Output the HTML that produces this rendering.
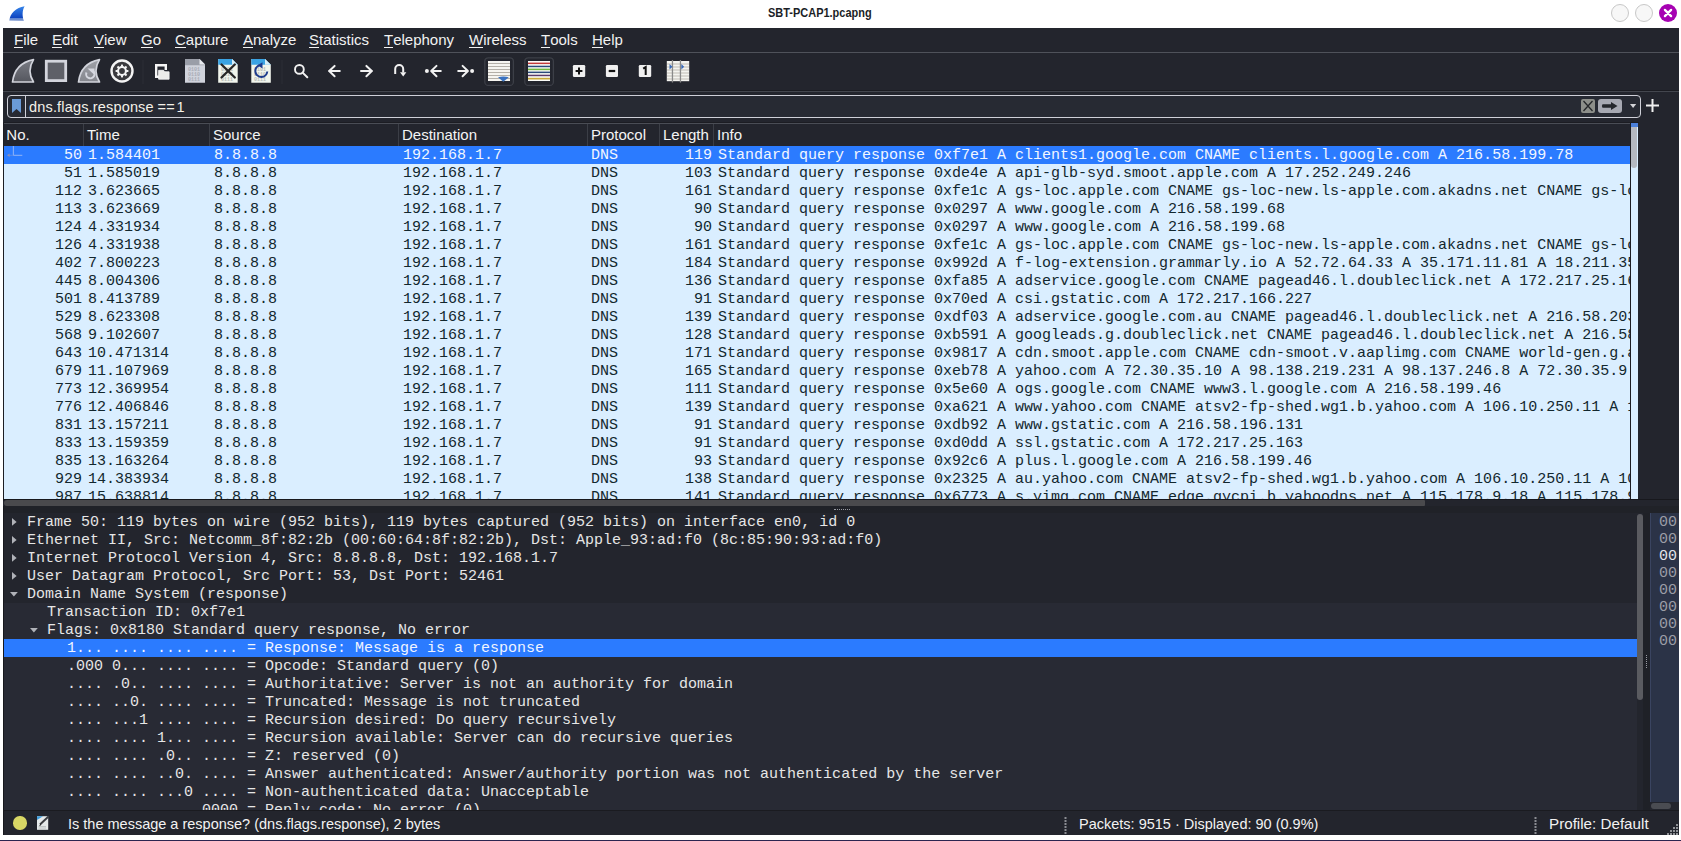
<!DOCTYPE html>
<html><head><meta charset="utf-8"><title>SBT-PCAP1.pcapng</title>
<style>
*{box-sizing:border-box}
html,body{margin:0;padding:0}
body{width:1681px;height:841px;overflow:hidden;position:relative;background:#fff;font-family:"Liberation Sans",sans-serif}
.a{position:absolute}
.mono{font-family:"Liberation Mono",monospace;font-size:15px;line-height:18px;white-space:pre}
.menu span{position:absolute;top:0;color:#f2f2f2;font-size:15px;line-height:24px}
.menu u{text-decoration:none;position:relative}.menu u::after{content:'';position:absolute;left:0;right:0;top:15.6px;height:1.4px;background:#f2f2f2}
.hdr span{position:absolute;top:0;color:#f4f4f4;font-size:15px;line-height:22px}
.hsep{position:absolute;top:0;width:1px;height:22px;background:#3b3e46}
.row{position:absolute;left:0;width:1626px;height:18px;background:#daeeff;color:#12272e;overflow:hidden}
.row.sel{background:#2b7bff;color:#f2f6ff}
.row span{position:absolute;top:1px}
.c0{right:1544px;text-align:right}
.drow{position:absolute;left:0;width:1633px;height:18px;color:#e6e6e6}
.drow.sel{background:#2b7bff;color:#f0f4ff}
.tri{position:absolute;width:0;height:0}
</style></head><body>

<svg class="a" style="left:8px;top:5px" width="18" height="17" viewBox="0 0 18 17"><defs><linearGradient id="fg" x1="0" y1="0" x2="0" y2="1"><stop offset="0" stop-color="#3585ea"/><stop offset="0.78" stop-color="#0f46c2"/><stop offset="0.86" stop-color="#7a9ad6"/><stop offset="1" stop-color="#5f7fc4"/></linearGradient></defs><path d="M1.3 15.6 C2 8.5 8 2.5 16.6 1.2 C14.3 5 14 11 15.9 15.8 Z" fill="url(#fg)"/></svg>
<div class="a" style="left:768px;top:5px;font-size:12.4px;font-weight:bold;color:#1b1e26;line-height:16px;transform:scaleX(0.885);transform-origin:0 0;white-space:pre">SBT-PCAP1.pcapng</div>
<div class="a" style="left:1611px;top:4px;width:18px;height:18px;border-radius:50%;background:#f7f7f7;border:1px solid #c8c8c8"></div>
<div class="a" style="left:1635px;top:4px;width:18px;height:18px;border-radius:50%;background:#f7f7f7;border:1px solid #c8c8c8"></div>
<svg class="a" style="left:1659px;top:4px" width="18" height="18" viewBox="0 0 18 18"><circle cx="9" cy="9" r="9" fill="#a602b2"/><path d="M5.9 5.9 L12.1 12.1 M12.1 5.9 L5.9 12.1" stroke="#fff" stroke-width="2.3" stroke-linecap="round"/></svg>
<div class="a" style="left:3px;top:28px;width:1676px;height:807px;background:#23252d"></div>
<div class="a" style="left:0;top:840px;width:1681px;height:1px;background:#2b2450"></div>
<div class="a menu" style="left:0;top:28px;width:1679px;height:24px">
<span style="left:14px"><u>F</u>ile</span>
<span style="left:52px"><u>E</u>dit</span>
<span style="left:94px"><u>V</u>iew</span>
<span style="left:141px"><u>G</u>o</span>
<span style="left:175px"><u>C</u>apture</span>
<span style="left:243px"><u>A</u>nalyze</span>
<span style="left:309px"><u>S</u>tatistics</span>
<span style="left:384px"><u>T</u>elephony</span>
<span style="left:469px"><u>W</u>ireless</span>
<span style="left:541px"><u>T</u>ools</span>
<span style="left:592px"><u>H</u>elp</span>
</div>
<div class="a" style="left:3px;top:52px;width:1676px;height:1px;background:#4f525a"></div>
<div class="a" style="left:3px;top:90px;width:1676px;height:1px;background:#1b1c22"></div>
<div class="a" style="left:3px;top:91px;width:1676px;height:1px;background:#43464e"></div>
<svg class="a" style="left:0;top:53px" width="700" height="38" viewBox="0 53 700 38">
<defs>
<linearGradient id="fin1" x1="0" y1="0" x2="0" y2="1"><stop offset="0" stop-color="#7a7c84"/><stop offset="1" stop-color="#55575f"/></linearGradient>
<linearGradient id="fin2" x1="0" y1="0" x2="0" y2="1"><stop offset="0" stop-color="#9fa1a8"/><stop offset="1" stop-color="#85878e"/></linearGradient>
</defs>
<!-- start capture fin -->
<path d="M12.5 82 C14 70 21 62 33.5 59.6 C29.5 66 28.5 74 33.5 82 Z" fill="url(#fin1)" stroke="#d2d4dc" stroke-width="1.7" stroke-linejoin="round"/>
<!-- stop square -->
<rect x="46.3" y="61.2" width="19.4" height="19.4" fill="#5e6068" stroke="#d3d5dd" stroke-width="2.8"/>
<!-- restart fin -->
<path d="M78.5 82 C80 70 87 62 99.5 59.6 C95.5 66 94.5 74 99.5 82 Z" fill="url(#fin2)" stroke="#d2d4dc" stroke-width="1.7" stroke-linejoin="round"/>
<path d="M86.5 72.5 A4.2 4.2 0 1 0 92.5 70.5" fill="none" stroke="#d6d8e0" stroke-width="2"/>
<path d="M87.5 68.5 H94.5 V75 Z" fill="#d6d8e0"/>
<!-- options gear -->
<circle cx="122" cy="71" r="10.5" fill="#3a3a3e" stroke="#f4f4f4" stroke-width="2.4"/>
<g fill="#f4f4f4">
<circle cx="122" cy="71" r="4.9"/>
<rect x="121" y="64.6" width="2" height="12.8"/>
<rect x="115.6" y="70" width="12.8" height="2"/>
<rect x="121" y="64.6" width="2" height="12.8" transform="rotate(45 122 71)"/>
<rect x="121" y="64.6" width="2" height="12.8" transform="rotate(-45 122 71)"/>
</g>
<circle cx="122" cy="71" r="2.9" fill="#3a3a3e"/>
<!-- separator -->
<rect x="142.5" y="60" width="1" height="24" fill="#2c2e36"/>
<!-- open -->
<path d="M165.8 70 V65.2 H156.2 V76.8 H159" fill="none" stroke="#f6f6f6" stroke-width="2.4"/>
<path d="M158.6 70.3 H163.5 L165 71.8 H169.1 V79.2 H158.6 Z" fill="#ececea" stroke="#f6f6f6" stroke-width="0.8"/>
<!-- file (grey) -->
<path d="M185 59 H199.5 L205 64.5 V82.8 H185 Z" fill="#d0d3dc"/>
<path d="M185 59 H199.5 L205 64.5 V65.2 H185 Z" fill="#9a9ea8"/>
<path d="M199.5 59 V64.5 H205" fill="#e8eaee"/>
<g fill="#a8acb6" font-family="Liberation Mono" font-size="5" font-weight="bold"><text x="188" y="70.5">0101</text><text x="188" y="75.5">0110</text><text x="188" y="80.5">0111</text></g>
<!-- close file -->
<path d="M218.2 59 H232 L237.7 64.7 V82.8 H218.2 Z" fill="#f1f5ec"/>
<path d="M218.2 59 H232 L237.7 64.7 V64.8 H218.2 Z" fill="#3aa3e3"/>
<path d="M232 59 V64.7 H237.7" fill="#d8eef8"/>
<g fill="#b8bcb8" font-family="Liberation Mono" font-size="5" font-weight="bold"><text x="221" y="70.5">0101</text><text x="221" y="75.5">0110</text><text x="221" y="80.5">0111</text></g>
<path d="M221.5 64.5 L234.8 77.5 M234.8 64.5 L221.5 77.5" stroke="#262626" stroke-width="2.3" stroke-linecap="round"/>
<!-- reload file -->
<path d="M251.3 59 H265 L270.8 64.7 V82.8 H251.3 Z" fill="#f1f5ec"/>
<path d="M251.3 59 H265 L270.8 64.7 V64.8 H251.3 Z" fill="#3aa3e3"/>
<path d="M265 59 V64.7 H270.8" fill="#d8eef8"/>
<g fill="#b8bcb8" font-family="Liberation Mono" font-size="5" font-weight="bold"><text x="254" y="70.5">0101</text><text x="254" y="75.5">0110</text><text x="254" y="80.5">0111</text></g>
<path d="M259.5 65.2 A6 6 0 1 0 267.3 71.5" fill="none" stroke="#1d3b8c" stroke-width="2"/>
<path d="M257.5 65.2 L262.5 62.3 V68.5 Z" fill="#1d3b8c"/>
<!-- separator -->
<rect x="281.5" y="60" width="1" height="24" fill="#2c2e36"/>
<!-- search -->
<circle cx="299.4" cy="69.4" r="4.4" fill="none" stroke="#f2f2f2" stroke-width="1.9"/>
<path d="M302.6 72.6 L307.3 77.3" stroke="#f2f2f2" stroke-width="2" stroke-linecap="round"/>
<!-- back -->
<path d="M339.8 71 H329 M334.6 65.9 L329.2 71 L334.6 76.2" fill="none" stroke="#f2f2f2" stroke-width="2" stroke-linecap="round" stroke-linejoin="round"/>
<!-- forward -->
<path d="M361 71 H372 M366.4 65.9 L371.8 71 L366.4 76.2" fill="none" stroke="#f2f2f2" stroke-width="2" stroke-linecap="round" stroke-linejoin="round"/>
<!-- go to packet (u-turn) -->
<path d="M395.2 74 V69 A4 4 0 0 1 403.2 69 V72.5" fill="none" stroke="#f2f2f2" stroke-width="2"/>
<path d="M400 72.2 H406.4 L403.2 76.6 Z" fill="#f2f2f2"/>
<!-- first packet -->
<circle cx="426.9" cy="71" r="2" fill="#f2f2f2"/>
<path d="M440.8 71 H431.5 M436.5 65.9 L431.2 71 L436.5 76.2" fill="none" stroke="#f2f2f2" stroke-width="2" stroke-linecap="round" stroke-linejoin="round"/>
<!-- last packet -->
<circle cx="472.1" cy="71" r="2" fill="#f2f2f2"/>
<path d="M458.2 71 H467.5 M462.6 65.9 L467.9 71 L462.6 76.2" fill="none" stroke="#f2f2f2" stroke-width="2" stroke-linecap="round" stroke-linejoin="round"/>
<!-- auto scroll button frame -->
<rect x="484.8" y="57.8" width="28.6" height="27.6" rx="3.5" fill="#23252d" stroke="#3c3f47" stroke-width="1.3"/>
<rect x="488" y="61" width="22" height="20" fill="#f6f5f0"/>
<g stroke="#b4b0a8" stroke-width="1"><path d="M488 63.5 H510 M488 66.5 H510 M488 69.5 H510 M488 72.5 H510 M488 75.5 H510 M488 78.5 H510"/></g>
<path d="M498 77.3 Q503.3 75.5 508.8 77.3 L503.3 81.8 Z" fill="#3a72c0"/>
<!-- colorize frame -->
<rect x="524.8" y="57.8" width="28.6" height="27.6" rx="3.5" fill="#23252d" stroke="#3c3f47" stroke-width="1.3"/>
<rect x="528" y="61" width="22" height="20" fill="#fbfbf8"/>
<rect x="528" y="62.6" width="22" height="1.5" fill="#c23a3a"/>
<rect x="528" y="65.7" width="22" height="1.5" fill="#2a4a7a"/>
<rect x="528" y="68.6" width="22" height="1.6" fill="#72b840"/>
<rect x="528" y="71.6" width="22" height="1.5" fill="#2a4a7a"/>
<rect x="528" y="74.7" width="22" height="1.5" fill="#5a3a6a"/>
<rect x="528" y="77.8" width="22" height="1.7" fill="#c8a838"/>
<!-- zoom in -->
<rect x="572.9" y="64.9" width="12.3" height="12.2" rx="1.3" fill="#f0f0f0"/>
<path d="M579 67.6 V74.4 M575.6 71 H582.4" stroke="#111" stroke-width="2"/>
<!-- zoom out -->
<rect x="605.9" y="64.9" width="12.1" height="12.2" rx="1.3" fill="#f0f0f0"/>
<path d="M608.7 71 H615.2" stroke="#111" stroke-width="2.2"/>
<!-- normal size -->
<rect x="638.8" y="64.9" width="12.4" height="12.2" rx="1.3" fill="#f0f0f0"/>
<path d="M643.2 68.6 L645.7 67 V75" fill="none" stroke="#111" stroke-width="2"/>
<!-- resize columns -->
<rect x="666.8" y="61" width="22.4" height="20.2" fill="#f4f4f0"/>
<g stroke="#c0bcb4" stroke-width="1"><path d="M667 64 H689 M667 67 H689 M667 70 H689 M667 73 H689 M667 76 H689 M667 79 H689"/></g>
<rect x="671.8" y="60" width="1.3" height="22.5" fill="#8a8a8a"/>
<rect x="679.8" y="60" width="1.3" height="22.5" fill="#8a8a8a"/>
<path d="M669.5 64 L672.5 66.8 L669.5 69.6 Z" fill="#3a6ab8"/>
<path d="M681.3 64 L684.2 66.8 L681.3 69.6 Z" fill="#3a6ab8"/>
</svg>

<div class="a" style="left:7px;top:95px;width:1634px;height:23px;border:1.5px solid #cfd0d8;border-radius:4px;background:#272a33"></div>
<div class="a" style="left:25px;top:96px;width:1px;height:21px;background:#cfd0d8"></div>
<svg class="a" style="left:12px;top:99px" width="9" height="14" viewBox="0 0 9 14"><path d="M0 0 H9 V14 L4.5 10 L0 14 Z" fill="#6a9bd8"/></svg>
<div class="a" style="left:29px;top:98px;font-size:14.5px;line-height:19px;color:#f4f1e8;letter-spacing:0.17px;white-space:pre">dns.flags.response</div>
<div class="a" style="left:157.5px;top:98px;font-size:14.5px;line-height:19px;color:#f4f1e8;letter-spacing:0.4px">==</div>
<div class="a" style="left:176.5px;top:98px;font-size:14.5px;line-height:19px;color:#f4f1e8">1</div>
<div class="a" style="left:1581px;top:99px;width:14px;height:14px;background:#8d8f8a;border-radius:2px"></div>
<svg class="a" style="left:1581px;top:99px" width="14" height="14"><path d="M2.5 2 L11.5 12 M11.5 2 L2.5 12" stroke="#25272a" stroke-width="1.3"/></svg>
<div class="a" style="left:1598px;top:99px;width:24px;height:14px;background:#a7a9b2;border-radius:3px"></div>
<svg class="a" style="left:1598px;top:99px" width="24" height="14"><path d="M4.5 5.2 H13 V3 L19.5 7 L13 11 V8.8 H4.5 Q3.2 7 4.5 5.2 Z" fill="#25272c"/></svg>
<svg class="a" style="left:1629.5px;top:104px" width="7" height="5"><path d="M0 0 H6.2 L3.1 4 Z" fill="#d4d4d8"/></svg>
<svg class="a" style="left:1645px;top:98px" width="15" height="15"><path d="M7.5 1 V14 M1 7.5 H14" stroke="#f0f0f0" stroke-width="2"/></svg>
<div class="a" style="left:3px;top:122px;width:1636px;height:379px;background:#1c1d23"></div>
<div class="a" style="left:4px;top:123px;width:1634px;height:1px;background:#4a4d55"></div>
<div class="a hdr" style="left:4px;top:124px;width:1626px;height:22px;background:#23252d">
<span style="left:2.3px">No.</span>
<div class="hsep" style="left:79px"></div>
<span style="left:83px">Time</span>
<div class="hsep" style="left:205px"></div>
<span style="left:209px">Source</span>
<div class="hsep" style="left:394px"></div>
<span style="left:398px">Destination</span>
<div class="hsep" style="left:583px"></div>
<span style="left:587px">Protocol</span>
<div class="hsep" style="left:655px"></div>
<span style="left:659px">Length</span>
<div class="hsep" style="left:709px"></div>
<span style="left:713px">Info</span>
</div>
<div class="a" style="left:4px;top:146px;width:1626px;height:353px;overflow:hidden">
<div class="row sel mono" style="top:0px">
<span style="left:0;width:78px;text-align:right">50</span>
<span style="left:84px">1.584401</span>
<span style="left:210px">8.8.8.8</span>
<span style="left:399px">192.168.1.7</span>
<span style="left:587px">DNS</span>
<span style="left:655px;width:53px;text-align:right">119</span>
<span style="left:714px">Standard query response 0xf7e1 A clients1.google.com CNAME clients.l.google.com A 216.58.199.78</span>
<svg class="a" style="left:0;top:0" width="24" height="14"><path d="M9.35 0 V9.3 H18.3" stroke="#93b4f6" stroke-width="1" fill="none"/><path d="M5 9.3 H9" stroke="#5c8ee8" stroke-width="1"/><path d="M3 9.3 L5.6 7.5 V11.1 Z" fill="#8d8fb4"/></svg>
</div>
<div class="row mono" style="top:18px">
<span style="left:0;width:78px;text-align:right">51</span>
<span style="left:84px">1.585019</span>
<span style="left:210px">8.8.8.8</span>
<span style="left:399px">192.168.1.7</span>
<span style="left:587px">DNS</span>
<span style="left:655px;width:53px;text-align:right">103</span>
<span style="left:714px">Standard query response 0xde4e A api-glb-syd.smoot.apple.com A 17.252.249.246</span>
</div>
<div class="row mono" style="top:36px">
<span style="left:0;width:78px;text-align:right">112</span>
<span style="left:84px">3.623665</span>
<span style="left:210px">8.8.8.8</span>
<span style="left:399px">192.168.1.7</span>
<span style="left:587px">DNS</span>
<span style="left:655px;width:53px;text-align:right">161</span>
<span style="left:714px">Standard query response 0xfe1c A gs-loc.apple.com CNAME gs-loc-new.ls-apple.com.akadns.net CNAME gs-loc.ls-apple.com</span>
</div>
<div class="row mono" style="top:54px">
<span style="left:0;width:78px;text-align:right">113</span>
<span style="left:84px">3.623669</span>
<span style="left:210px">8.8.8.8</span>
<span style="left:399px">192.168.1.7</span>
<span style="left:587px">DNS</span>
<span style="left:655px;width:53px;text-align:right">90</span>
<span style="left:714px">Standard query response 0x0297 A www.google.com A 216.58.199.68</span>
</div>
<div class="row mono" style="top:72px">
<span style="left:0;width:78px;text-align:right">124</span>
<span style="left:84px">4.331934</span>
<span style="left:210px">8.8.8.8</span>
<span style="left:399px">192.168.1.7</span>
<span style="left:587px">DNS</span>
<span style="left:655px;width:53px;text-align:right">90</span>
<span style="left:714px">Standard query response 0x0297 A www.google.com A 216.58.199.68</span>
</div>
<div class="row mono" style="top:90px">
<span style="left:0;width:78px;text-align:right">126</span>
<span style="left:84px">4.331938</span>
<span style="left:210px">8.8.8.8</span>
<span style="left:399px">192.168.1.7</span>
<span style="left:587px">DNS</span>
<span style="left:655px;width:53px;text-align:right">161</span>
<span style="left:714px">Standard query response 0xfe1c A gs-loc.apple.com CNAME gs-loc-new.ls-apple.com.akadns.net CNAME gs-loc.ls-apple.com</span>
</div>
<div class="row mono" style="top:108px">
<span style="left:0;width:78px;text-align:right">402</span>
<span style="left:84px">7.800223</span>
<span style="left:210px">8.8.8.8</span>
<span style="left:399px">192.168.1.7</span>
<span style="left:587px">DNS</span>
<span style="left:655px;width:53px;text-align:right">184</span>
<span style="left:714px">Standard query response 0x992d A f-log-extension.grammarly.io A 52.72.64.33 A 35.171.11.81 A 18.211.35.118</span>
</div>
<div class="row mono" style="top:126px">
<span style="left:0;width:78px;text-align:right">445</span>
<span style="left:84px">8.004306</span>
<span style="left:210px">8.8.8.8</span>
<span style="left:399px">192.168.1.7</span>
<span style="left:587px">DNS</span>
<span style="left:655px;width:53px;text-align:right">136</span>
<span style="left:714px">Standard query response 0xfa85 A adservice.google.com CNAME pagead46.l.doubleclick.net A 172.217.25.162</span>
</div>
<div class="row mono" style="top:144px">
<span style="left:0;width:78px;text-align:right">501</span>
<span style="left:84px">8.413789</span>
<span style="left:210px">8.8.8.8</span>
<span style="left:399px">192.168.1.7</span>
<span style="left:587px">DNS</span>
<span style="left:655px;width:53px;text-align:right">91</span>
<span style="left:714px">Standard query response 0x70ed A csi.gstatic.com A 172.217.166.227</span>
</div>
<div class="row mono" style="top:162px">
<span style="left:0;width:78px;text-align:right">529</span>
<span style="left:84px">8.623308</span>
<span style="left:210px">8.8.8.8</span>
<span style="left:399px">192.168.1.7</span>
<span style="left:587px">DNS</span>
<span style="left:655px;width:53px;text-align:right">139</span>
<span style="left:714px">Standard query response 0xdf03 A adservice.google.com.au CNAME pagead46.l.doubleclick.net A 216.58.203.98</span>
</div>
<div class="row mono" style="top:180px">
<span style="left:0;width:78px;text-align:right">568</span>
<span style="left:84px">9.102607</span>
<span style="left:210px">8.8.8.8</span>
<span style="left:399px">192.168.1.7</span>
<span style="left:587px">DNS</span>
<span style="left:655px;width:53px;text-align:right">128</span>
<span style="left:714px">Standard query response 0xb591 A googleads.g.doubleclick.net CNAME pagead46.l.doubleclick.net A 216.58.199.66</span>
</div>
<div class="row mono" style="top:198px">
<span style="left:0;width:78px;text-align:right">643</span>
<span style="left:84px">10.471314</span>
<span style="left:210px">8.8.8.8</span>
<span style="left:399px">192.168.1.7</span>
<span style="left:587px">DNS</span>
<span style="left:655px;width:53px;text-align:right">171</span>
<span style="left:714px">Standard query response 0x9817 A cdn.smoot.apple.com CNAME cdn-smoot.v.aaplimg.com CNAME world-gen.g.aaplimg.com</span>
</div>
<div class="row mono" style="top:216px">
<span style="left:0;width:78px;text-align:right">679</span>
<span style="left:84px">11.107969</span>
<span style="left:210px">8.8.8.8</span>
<span style="left:399px">192.168.1.7</span>
<span style="left:587px">DNS</span>
<span style="left:655px;width:53px;text-align:right">165</span>
<span style="left:714px">Standard query response 0xeb78 A yahoo.com A 72.30.35.10 A 98.138.219.231 A 98.137.246.8 A 72.30.35.9 A 98</span>
</div>
<div class="row mono" style="top:234px">
<span style="left:0;width:78px;text-align:right">773</span>
<span style="left:84px">12.369954</span>
<span style="left:210px">8.8.8.8</span>
<span style="left:399px">192.168.1.7</span>
<span style="left:587px">DNS</span>
<span style="left:655px;width:53px;text-align:right">111</span>
<span style="left:714px">Standard query response 0x5e60 A ogs.google.com CNAME www3.l.google.com A 216.58.199.46</span>
</div>
<div class="row mono" style="top:252px">
<span style="left:0;width:78px;text-align:right">776</span>
<span style="left:84px">12.406846</span>
<span style="left:210px">8.8.8.8</span>
<span style="left:399px">192.168.1.7</span>
<span style="left:587px">DNS</span>
<span style="left:655px;width:53px;text-align:right">139</span>
<span style="left:714px">Standard query response 0xa621 A www.yahoo.com CNAME atsv2-fp-shed.wg1.b.yahoo.com A 106.10.250.11 A 106.10.250.10</span>
</div>
<div class="row mono" style="top:270px">
<span style="left:0;width:78px;text-align:right">831</span>
<span style="left:84px">13.157211</span>
<span style="left:210px">8.8.8.8</span>
<span style="left:399px">192.168.1.7</span>
<span style="left:587px">DNS</span>
<span style="left:655px;width:53px;text-align:right">91</span>
<span style="left:714px">Standard query response 0xdb92 A www.gstatic.com A 216.58.196.131</span>
</div>
<div class="row mono" style="top:288px">
<span style="left:0;width:78px;text-align:right">833</span>
<span style="left:84px">13.159359</span>
<span style="left:210px">8.8.8.8</span>
<span style="left:399px">192.168.1.7</span>
<span style="left:587px">DNS</span>
<span style="left:655px;width:53px;text-align:right">91</span>
<span style="left:714px">Standard query response 0xd0dd A ssl.gstatic.com A 172.217.25.163</span>
</div>
<div class="row mono" style="top:306px">
<span style="left:0;width:78px;text-align:right">835</span>
<span style="left:84px">13.163264</span>
<span style="left:210px">8.8.8.8</span>
<span style="left:399px">192.168.1.7</span>
<span style="left:587px">DNS</span>
<span style="left:655px;width:53px;text-align:right">93</span>
<span style="left:714px">Standard query response 0x92c6 A plus.l.google.com A 216.58.199.46</span>
</div>
<div class="row mono" style="top:324px">
<span style="left:0;width:78px;text-align:right">929</span>
<span style="left:84px">14.383934</span>
<span style="left:210px">8.8.8.8</span>
<span style="left:399px">192.168.1.7</span>
<span style="left:587px">DNS</span>
<span style="left:655px;width:53px;text-align:right">138</span>
<span style="left:714px">Standard query response 0x2325 A au.yahoo.com CNAME atsv2-fp-shed.wg1.b.yahoo.com A 106.10.250.11 A 106.10.250.10</span>
</div>
<div class="row mono" style="top:342px">
<span style="left:0;width:78px;text-align:right">987</span>
<span style="left:84px">15.638814</span>
<span style="left:210px">8.8.8.8</span>
<span style="left:399px">192.168.1.7</span>
<span style="left:587px">DNS</span>
<span style="left:655px;width:53px;text-align:right">141</span>
<span style="left:714px">Standard query response 0x6773 A s.yimg.com CNAME edge.gycpi.b.yahoodns.net A 115.178.9.18 A 115.178.9.17</span>
</div>
</div>
<div class="a" style="left:1630px;top:123px;width:1px;height:376px;background:#1c1d23"></div>
<div class="a" style="left:1631px;top:123px;width:7px;height:376px;background:#daeeff"></div>
<div class="a" style="left:1631px;top:123px;width:7px;height:3.5px;background:#4b80da"></div>
<div class="a" style="left:1631px;top:126.5px;width:6px;height:41px;background:#b5b9c1;border-radius:0 0 3px 3px"></div>
<div class="a" style="left:1638px;top:123px;width:41px;height:376px;background:#23252d"></div>
<div class="a" style="left:3px;top:499px;width:1676px;height:1px;background:#17181d"></div>
<div class="a" style="left:4px;top:500px;width:1675px;height:6px;background:#23252d"></div>
<div class="a" style="left:4px;top:500px;width:1421px;height:6px;background:#4a4a4d;border-radius:3px 1px 1px 3px"></div>
<div class="a" style="left:3px;top:506px;width:1676px;height:7px;background:#202228"></div>
<div class="a" style="left:834px;top:509px;width:16px;height:1px;border-top:1px dotted #9a9ca4"></div>
<div class="a" style="left:4px;top:513px;width:1640px;height:297px;background:#23252d;overflow:hidden">
<div class="a" style="left:0;top:90px;width:1633px;height:207px;background:#282a34"></div>
<div class="drow mono" style="top:0px"><span class="a" style="top:1px;left:23px">Frame 50: 119 bytes on wire (952 bits), 119 bytes captured (952 bits) on interface en0, id 0</span>
<svg class="a" style="left:7.8px;top:5px" width="6" height="9"><path d="M0 0 L4.6 3.9 L0 7.8 Z" fill="#b0b2b8"/></svg>
</div>
<div class="drow mono" style="top:18px"><span class="a" style="top:1px;left:23px">Ethernet II, Src: Netcomm_8f:82:2b (00:60:64:8f:82:2b), Dst: Apple_93:ad:f0 (8c:85:90:93:ad:f0)</span>
<svg class="a" style="left:7.8px;top:5px" width="6" height="9"><path d="M0 0 L4.6 3.9 L0 7.8 Z" fill="#b0b2b8"/></svg>
</div>
<div class="drow mono" style="top:36px"><span class="a" style="top:1px;left:23px">Internet Protocol Version 4, Src: 8.8.8.8, Dst: 192.168.1.7</span>
<svg class="a" style="left:7.8px;top:5px" width="6" height="9"><path d="M0 0 L4.6 3.9 L0 7.8 Z" fill="#b0b2b8"/></svg>
</div>
<div class="drow mono" style="top:54px"><span class="a" style="top:1px;left:23px">User Datagram Protocol, Src Port: 53, Dst Port: 52461</span>
<svg class="a" style="left:7.8px;top:5px" width="6" height="9"><path d="M0 0 L4.6 3.9 L0 7.8 Z" fill="#b0b2b8"/></svg>
</div>
<div class="drow mono" style="top:72px"><span class="a" style="top:1px;left:23px">Domain Name System (response)</span>
<svg class="a" style="left:6.2px;top:7px" width="8" height="5"><path d="M0 0 H7.8 L3.9 4.4 Z" fill="#b0b2b8"/></svg>
</div>
<div class="drow mono" style="top:90px"><span class="a" style="top:1px;left:43px">Transaction ID: 0xf7e1</span>
</div>
<div class="drow mono" style="top:108px"><span class="a" style="top:1px;left:43px">Flags: 0x8180 Standard query response, No error</span>
<svg class="a" style="left:26.2px;top:7px" width="8" height="5"><path d="M0 0 H7.8 L3.9 4.4 Z" fill="#b0b2b8"/></svg>
</div>
<div class="drow sel mono" style="top:126px"><span class="a" style="top:1px;left:63px">1... .... .... .... = Response: Message is a response</span>
</div>
<div class="drow mono" style="top:144px"><span class="a" style="top:1px;left:63px">.000 0... .... .... = Opcode: Standard query (0)</span>
</div>
<div class="drow mono" style="top:162px"><span class="a" style="top:1px;left:63px">.... .0.. .... .... = Authoritative: Server is not an authority for domain</span>
</div>
<div class="drow mono" style="top:180px"><span class="a" style="top:1px;left:63px">.... ..0. .... .... = Truncated: Message is not truncated</span>
</div>
<div class="drow mono" style="top:198px"><span class="a" style="top:1px;left:63px">.... ...1 .... .... = Recursion desired: Do query recursively</span>
</div>
<div class="drow mono" style="top:216px"><span class="a" style="top:1px;left:63px">.... .... 1... .... = Recursion available: Server can do recursive queries</span>
</div>
<div class="drow mono" style="top:234px"><span class="a" style="top:1px;left:63px">.... .... .0.. .... = Z: reserved (0)</span>
</div>
<div class="drow mono" style="top:252px"><span class="a" style="top:1px;left:63px">.... .... ..0. .... = Answer authenticated: Answer/authority portion was not authenticated by the server</span>
</div>
<div class="drow mono" style="top:270px"><span class="a" style="top:1px;left:63px">.... .... ...0 .... = Non-authenticated data: Unacceptable</span>
</div>
<div class="drow mono" style="top:288px"><span class="a" style="top:1px;left:63px">.... .... .... 0000 = Reply code: No error (0)</span>
</div>
</div>
<div class="a" style="left:1637px;top:514px;width:6px;height:186px;background:#5a5b60;border-radius:3px"></div>
<div class="a" style="left:1643px;top:513px;width:7px;height:297px;background:#1f2127"></div>
<div class="a" style="left:1646px;top:655px;width:1px;height:13px;border-left:1px dotted #9a9ca4"></div>
<div class="a" style="left:1650px;top:513px;width:29px;height:289px;background:#2b3347;border-left:1px solid #3a4460"></div>
<div class="a mono" style="left:1659px;top:514px;color:#9b9ea6;line-height:17px">00</div>
<div class="a mono" style="left:1659px;top:531px;color:#9b9ea6;line-height:17px">00</div>
<div class="a mono" style="left:1659px;top:548px;color:#e4e6ea;line-height:17px">00</div>
<div class="a mono" style="left:1659px;top:565px;color:#9b9ea6;line-height:17px">00</div>
<div class="a mono" style="left:1659px;top:582px;color:#9b9ea6;line-height:17px">00</div>
<div class="a mono" style="left:1659px;top:599px;color:#9b9ea6;line-height:17px">00</div>
<div class="a mono" style="left:1659px;top:616px;color:#9b9ea6;line-height:17px">00</div>
<div class="a mono" style="left:1659px;top:633px;color:#9b9ea6;line-height:17px">00</div>
<div class="a" style="left:1651px;top:803px;width:20px;height:6px;background:#4a4c52;border-radius:3px"></div>
<div class="a" style="left:3px;top:506px;width:1px;height:329px;background:#17181d"></div>
<div class="a" style="left:3px;top:810px;width:1676px;height:1px;background:#1a1b20"></div>
<div class="a" style="left:13.4px;top:816.2px;width:13.3px;height:13.5px;border-radius:50%;background:#d8d765"></div>
<svg class="a" style="left:36px;top:815px" width="15" height="16"><rect x="1" y="1.2" width="11.2" height="13.6" fill="#e6eaea"/><path d="M1 1.2 H7 L1 5 Z" fill="#3f9ddc"/><path d="M2.5 11.5 H10 M2.5 13 H10" stroke="#b8bcbc" stroke-width="0.8"/><path d="M4 9.5 L12.5 1.5" stroke="#3a3c40" stroke-width="2"/><path d="M3 11 L4.6 8.9 L5 10.2 Z" fill="#111"/></svg>
<div class="a" style="left:68px;top:815px;font-size:14.5px;line-height:19px;color:#f2f2f2">Is the message a response? (dns.flags.response), 2 bytes</div>
<svg class="a" style="left:1064px;top:816px" width="3" height="18"><rect x="0.5" y="1" width="2" height="2" fill="#8a8c92"/><rect x="0.5" y="4" width="2" height="2" fill="#8a8c92"/><rect x="0.5" y="7" width="2" height="2" fill="#8a8c92"/><rect x="0.5" y="10" width="2" height="2" fill="#8a8c92"/><rect x="0.5" y="13" width="2" height="2" fill="#8a8c92"/><rect x="0.5" y="16" width="2" height="2" fill="#8a8c92"/></svg>
<div class="a" style="left:1079px;top:815px;font-size:14.5px;line-height:19px;color:#f2f2f2">Packets: 9515 · Displayed: 90 (0.9%)</div>
<svg class="a" style="left:1534px;top:816px" width="3" height="18"><rect x="0.5" y="1" width="2" height="2" fill="#8a8c92"/><rect x="0.5" y="4" width="2" height="2" fill="#8a8c92"/><rect x="0.5" y="7" width="2" height="2" fill="#8a8c92"/><rect x="0.5" y="10" width="2" height="2" fill="#8a8c92"/><rect x="0.5" y="13" width="2" height="2" fill="#8a8c92"/><rect x="0.5" y="16" width="2" height="2" fill="#8a8c92"/></svg>
<div class="a" style="left:1549px;top:814px;font-size:15.2px;line-height:19px;color:#f2f2f2">Profile: Default</div>
<svg class="a" style="left:1664px;top:822px" width="14" height="13"><rect x="12" y="11" width="2" height="2" fill="#8f9196"/><rect x="9" y="11" width="2" height="2" fill="#8f9196"/><rect x="6" y="11" width="2" height="2" fill="#8f9196"/><rect x="3" y="11" width="2" height="2" fill="#8f9196"/><rect x="12" y="8" width="2" height="2" fill="#8f9196"/><rect x="9" y="8" width="2" height="2" fill="#8f9196"/><rect x="6" y="8" width="2" height="2" fill="#8f9196"/><rect x="12" y="5" width="2" height="2" fill="#8f9196"/><rect x="9" y="5" width="2" height="2" fill="#8f9196"/><rect x="12" y="2" width="2" height="2" fill="#8f9196"/></svg>
</body></html>
